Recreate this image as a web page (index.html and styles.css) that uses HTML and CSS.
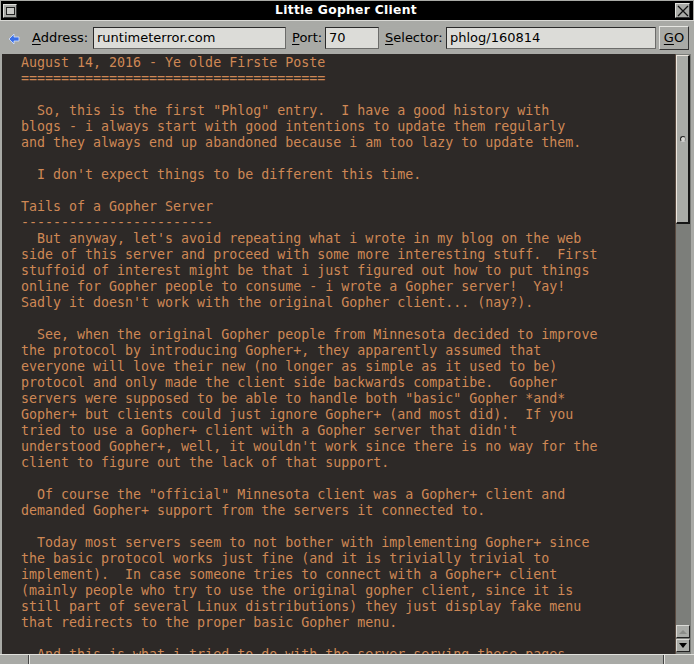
FILE: index.html
```html
<!DOCTYPE html>
<html>
<head>
<meta charset="utf-8">
<title>Little Gopher Client</title>
<link rel="stylesheet" href="styles.css">
</head>
<body>
<div class="window">
  <div class="titlebar">
    <span class="menu-btn"><span class="menu-inner"></span></span>
    <span class="title">Little Gopher Client</span>
    <span class="close-btn">
      <svg width="12" height="12" viewBox="0 0 12 12"><path d="M1 1 L11 11 M11 1 L1 11" stroke="#111" stroke-width="1.3" fill="none"/></svg>
    </span>
  </div>
  <div class="toolbar">
    <svg class="back" width="12" height="12" viewBox="0 0 12 12"><path d="M1 6 L6 1 L6 4 L11 4 L11 8 L6 8 L6 11 Z" fill="#3b6fe6" stroke="#d8e4ff" stroke-width="0.8"/></svg>
    <span class="label l-addr"><u>A</u>ddress:</span>
    <div class="field f-addr">runtimeterror.com</div>
    <span class="label l-port"><u>P</u>ort:</span>
    <div class="field f-port">70</div>
    <span class="label l-sel"><u>S</u>elector:</span>
    <div class="field f-sel">phlog/160814</div>
    <div class="go"><u>G</u>O</div>
  </div>
  <div class="body">
    <pre class="content">August 14, 2016 - Ye olde Firste Poste
======================================

  So, this is the first "Phlog" entry.  I have a good history with
blogs - i always start with good intentions to update them regularly
and they always end up abandoned because i am too lazy to update them.

  I don't expect things to be different this time.

Tails of a Gopher Server
------------------------
  But anyway, let's avoid repeating what i wrote in my blog on the web
side of this server and proceed with some more interesting stuff.  First
stuffoid of interest might be that i just figured out how to put things
online for Gopher people to consume - i wrote a Gopher server!  Yay!
Sadly it doesn't work with the original Gopher client... (nay?).

  See, when the original Gopher people from Minnesota decided to improve
the protocol by introducing Gopher+, they apparently assumed that
everyone will love their new (no longer as simple as it used to be)
protocol and only made the client side backwards compatibe.  Gopher
servers were supposed to be able to handle both "basic" Gopher *and*
Gopher+ but clients could just ignore Gopher+ (and most did).  If you
tried to use a Gopher+ client with a Gopher server that didn't
understood Gopher+, well, it wouldn't work since there is no way for the
client to figure out the lack of that support.

  Of course the "official" Minnesota client was a Gopher+ client and
demanded Gopher+ support from the servers it connected to.

  Today most servers seem to not bother with implementing Gopher+ since
the basic protocol works just fine (and it is trivially trivial to
implement).  In case someone tries to connect with a Gopher+ client
(mainly people who try to use the original gopher client, since it is
still part of several Linux distributions) they just display fake menu
that redirects to the proper basic Gopher menu.

  And this is what i tried to do with the server serving these pages -
</pre>
    <div class="scrollbar">
      <div class="thumb"><span class="grip"></span></div>
      <div class="trough"></div>
      <div class="sbtn up"><span class="tri tri-up"></span></div>
      <div class="sbtn down"><span class="tri tri-down"></span></div>
    </div>
  </div>
  <div class="status">
    <span class="cell c1"></span>
    <span class="cell c2"></span>
    <span class="cell c3"></span>
  </div>
</div>
</body>
</html>
```
FILE: styles.css
```css
* { box-sizing: border-box; }
html, body { margin: 0; padding: 0; background: #a9aaa6; }
.window {
  width: 694px;
  height: 664px;
  background: #a9aaa6;
  overflow: hidden;
  font-family: "DejaVu Sans", sans-serif;
  font-size: 13px;
  color: #000;
}
.titlebar {
  margin: 1px 1px 0 1px;
  height: 19px;
  background: #000;
  display: flex;
  align-items: center;
  position: relative;
}
.menu-btn {
  width: 14px;
  height: 14px;
  margin-left: 2px;
  background: #a9aaa6;
  border: 1px solid #e0e0dc;
  border-right-color: #333;
  border-bottom-color: #333;
  display: flex;
  align-items: center;
  justify-content: center;
}
.menu-inner {
  width: 9px;
  height: 8px;
  border: 1px solid #222;
  background: #c9cac6;
}
.title {
  flex: 1;
  text-align: center;
  color: #fff;
  font-weight: bold;
  font-size: 12.3px;
  line-height: 19px;
  letter-spacing: 0.3px;
}
.close-btn {
  width: 15px;
  height: 15px;
  margin-right: 3px;
  background: #a9aaa6;
  border: 1px solid #e0e0dc;
  border-right-color: #333;
  border-bottom-color: #333;
  display: flex;
  align-items: center;
  justify-content: center;
}
.toolbar {
  height: 34px;
  display: flex;
  align-items: center;
  padding-top: 1px;
  border-top: 1px solid #d8d8d4;
}
.back { margin-left: 8px; margin-top: 1px; }
.label { white-space: nowrap; line-height: 22px; }
.label u { text-decoration-thickness: 1px; text-underline-offset: 2px; }
.l-addr { margin-left: 12px; width: 55px; }
.l-port { margin-left: 6px; width: 28px; }
.l-sel { margin-left: 6px; width: 55px; }
.field {
  height: 22px;
  background: #dcdcd8;
  border: 1px solid #2a2a2a;
  border-right-color: #6c6c6a;
  border-bottom-color: #6c6c6a;
  line-height: 20px;
  padding-left: 3px;
  white-space: nowrap;
  overflow: hidden;
}
.f-addr { margin-left: 6px; width: 193px; }
.f-port { margin-left: 5px; width: 54px; }
.f-sel { margin-left: 6px; width: 210px; }
.go {
  margin-left: 3px;
  width: 30px;
  height: 24px;
  margin-top: -1px;
  border: 1px solid #e6e6e2;
  border-right-color: #333;
  border-bottom-color: #333;
  text-align: center;
  line-height: 22px;
  font-size: 13px;
}
.go u { text-decoration-thickness: 1px; text-underline-offset: 2px; }
.body {
  display: flex;
  height: 600px;
  margin-left: 2px;
  margin-right: 3px;
}
.content {
  margin: 0;
  flex: 1;
  height: 600px;
  background: #2d2927;
  color: #cf8855;
  font-family: "DejaVu Sans Mono", monospace;
  font-size: 13.3px;
  line-height: 16px;
  padding: 1px 0 0 19px;
  white-space: pre;
  overflow: hidden;
  border-right: 1px solid #5a4a40;
}
.scrollbar {
  width: 15px;
  height: 600px;
  background: #7c7e7a;
  display: flex;
  flex-direction: column;
  padding-top: 1px;
  padding-bottom: 2px;
}
.thumb {
  height: 169px;
  width: 14px;
  background: #a9aba7;
  border: 1px solid #ece6de;
  border-right: 2px solid #151515;
  border-bottom: 2px solid #151515;
  display: flex;
  align-items: center;
  justify-content: center;
}
.grip {
  width: 6px;
  height: 6px;
  border-radius: 50%;
  background: #d8d8d4;
  border: 1.5px solid #222;
  border-right-color: #888;
  border-bottom-color: #ccc;
}
.trough { flex: 1; }
.sbtn {
  height: 13px;
  width: 14px;
  background: #a9aba7;
  border: 1px solid #dadad6;
  border-right-color: #222;
  border-bottom-color: #222;
  display: flex;
  align-items: center;
  justify-content: center;
}
.sbtn.down { margin-top: 1px; }
.tri { width: 0; height: 0; border-left: 4px solid transparent; border-right: 4px solid transparent; }
.tri-up { border-bottom: 4px solid #8a8c88; }
.tri-down { border-top: 5px solid #000; }
.status {
  height: 10px;
  border-top: 1px solid #e0e0dc;
  display: flex;
  margin-top: 0;
}
.cell { height: 9px; }
.c1 { width: 29px; border-right: 1px solid #444; }
.c2 { flex: 1; border-left: 1px solid #e6e6e2; border-right: 1px solid #444; }
.c3 { width: 30px; border-left: 1px solid #e6e6e2; }
```
